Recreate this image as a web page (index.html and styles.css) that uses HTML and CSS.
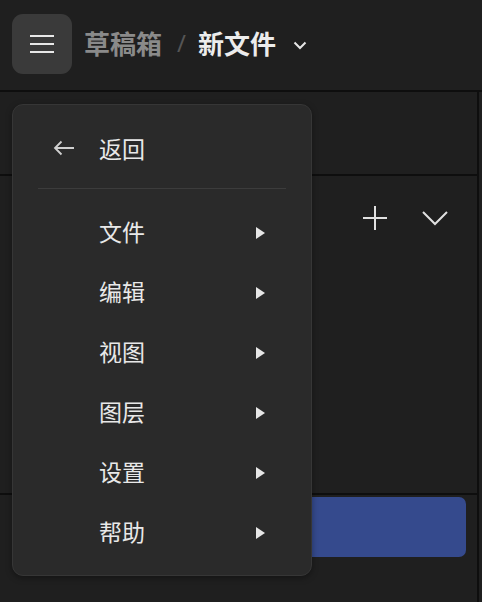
FILE: index.html
```html
<!DOCTYPE html>
<html lang="zh">
<head>
<meta charset="utf-8">
<link rel="stylesheet" href="styles.css">
</head>
<body>
<header class="topbar">
  <button class="menu-btn" aria-label="菜单">
    <span></span><span></span><span></span>
  </button>
  <nav class="crumbs">
    <span class="crumb-parent">草稿箱</span>
    <span class="crumb-sep">/</span>
    <span class="crumb-current">新文件</span>
    <svg class="crumb-chev" width="14" height="10" viewBox="0 0 14 10"><path d="M1.5 2.5 L7 8 L12.5 2.5" fill="none" stroke="#e6e6e6" stroke-width="2"/></svg>
  </nav>
</header>
<main class="workspace">
  <section class="pane pane-top"></section>
  <section class="pane pane-mid">
    <div class="pane-tools">
      <svg width="24" height="24" viewBox="0 0 24 24"><path d="M12 0 V24 M0 12 H24" stroke="#e0e0e0" stroke-width="2" fill="none"/></svg>
      <svg width="26" height="16" viewBox="0 0 26 16"><path d="M1 2 L13 14 L25 2" stroke="#e0e0e0" stroke-width="2" fill="none"/></svg>
    </div>
  </section>
  <section class="pane pane-bottom">
    <div class="primary-bar"></div>
  </section>
</main>
<div class="dropdown">
  <div class="dd-back">
    <svg class="dd-back-icon" width="22" height="16" viewBox="0 0 22 16"><path d="M21 8 H2 M8.5 1.5 L2 8 L8.5 14.5" stroke="#d0d0d0" stroke-width="1.8" fill="none"/></svg>
    <span>返回</span>
  </div>
  <div class="dd-divider"></div>
  <ul class="dd-list">
    <li class="dd-item"><span>文件</span><i class="dd-tri"></i></li>
    <li class="dd-item"><span>编辑</span><i class="dd-tri"></i></li>
    <li class="dd-item"><span>视图</span><i class="dd-tri"></i></li>
    <li class="dd-item"><span>图层</span><i class="dd-tri"></i></li>
    <li class="dd-item"><span>设置</span><i class="dd-tri"></i></li>
    <li class="dd-item"><span>帮助</span><i class="dd-tri"></i></li>
  </ul>
</div>
</body>
</html>
```
FILE: styles.css
```css
* { box-sizing: border-box; }
html, body {
  margin: 0;
  padding: 0;
  background: #1f1f1f;
  width: 482px;
  height: 602px;
  overflow: hidden;
  font-family: "Noto Sans CJK SC", "Noto Sans", sans-serif;
  color: #e6e6e6;
}
.topbar {
  height: 92px;
  border-bottom: 2px solid #0e0e0e;
  display: flex;
  align-items: flex-start;
  padding: 14px 0 0 12px;
}
.menu-btn {
  width: 60px;
  height: 60px;
  border: none;
  border-radius: 11px;
  background: #3a3a3a;
  display: flex;
  flex-direction: column;
  align-items: center;
  justify-content: center;
  gap: 6px;
  padding: 0;
}
.menu-btn span {
  display: block;
  width: 24px;
  height: 2px;
  background: #e8e8e8;
}
.crumbs {
  display: flex;
  align-items: center;
  height: 60px;
  margin-left: 12px;
  font-size: 26px;
  font-weight: 700;
  padding-bottom: 3px;
}
.crumb-parent { color: #8a8a8a; }
.crumb-sep { color: #555; font-weight: 400; margin: 0 12px 0 15px; font-family: "Noto Sans", sans-serif; font-size: 24px; }
.crumb-current { color: #ececec; }
.crumb-chev { margin-left: 17px; margin-top: 5px; }
.workspace {
  width: 479px;
  border-right: 2px solid #0e0e0e;
  display: flex;
  flex-direction: column;
}
.pane { border-bottom: 2px solid #0e0e0e; }
.pane-top { height: 84px; }
.pane-mid { height: 319px; padding: 30px 29px 0 0; }
.pane-tools {
  display: flex;
  justify-content: flex-end;
  align-items: center;
  gap: 35px;
  height: 24px;
}
.pane-bottom { border-bottom: none; padding: 2px 11px 0 12px; height: 110px; }
.primary-bar {
  height: 60px;
  background: #354a8d;
  border-radius: 7px;
}
.dropdown {
  position: absolute;
  left: 12px;
  top: 104px;
  width: 300px;
  height: 472px;
  background: #2a2a2a;
  border: 1px solid #363636;
  border-radius: 11px;
  padding: 15px 25px 0 25px;
  box-shadow: 0 2px 6px rgba(0,0,0,0.35);
}
.dd-back {
  height: 60px;
  display: flex;
  align-items: center;
  padding-left: 15px;
  padding-bottom: 4px;
  font-size: 23px;
  color: #e8e8e8;
}
.dd-back-icon { margin-right: 24px; margin-top: 0; }
.dd-divider {
  height: 1px;
  background: #3c3c3c;
  margin-top: 8px;
}
.dd-list {
  list-style: none;
  margin: 14px 0 0 0;
  padding: 0;
}
.dd-item {
  height: 60px;
  display: flex;
  align-items: center;
  justify-content: space-between;
  padding: 0 21px 0 61px;
  font-size: 23px;
  color: #e8e8e8;
}
.dd-item span { position: relative; top: -2px; }
.dd-tri {
  width: 0;
  height: 0;
  border-left: 9px solid #e6e6e6;
  border-top: 6px solid transparent;
  border-bottom: 6px solid transparent;
}
```
